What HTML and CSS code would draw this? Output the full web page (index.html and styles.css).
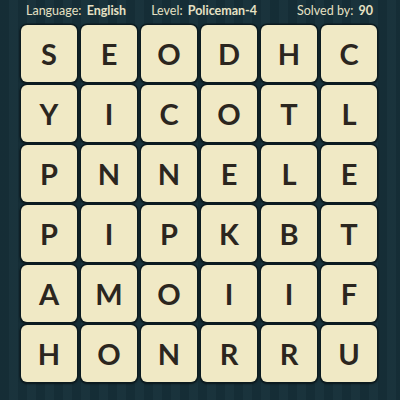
FILE: index.html
```html
<!DOCTYPE html>
<html>
<head>
<meta charset="utf-8">
<link rel="stylesheet" href="styles.css">
</head>
<body>
<div class="page">
  <div class="header">
    <span class="item">Language: <b>English</b></span>
    <span class="item">Level: <b>Policeman-4</b></span>
    <span class="item solved">Solved by: <b>90</b></span>
  </div>
  <div class="grid">
    <div class="tile">S</div><div class="tile">E</div><div class="tile">O</div><div class="tile">D</div><div class="tile">H</div><div class="tile">C</div>
    <div class="tile">Y</div><div class="tile">I</div><div class="tile">C</div><div class="tile">O</div><div class="tile">T</div><div class="tile">L</div>
    <div class="tile">P</div><div class="tile">N</div><div class="tile">N</div><div class="tile">E</div><div class="tile">L</div><div class="tile">E</div>
    <div class="tile">P</div><div class="tile">I</div><div class="tile">P</div><div class="tile">K</div><div class="tile">B</div><div class="tile">T</div>
    <div class="tile">A</div><div class="tile">M</div><div class="tile">O</div><div class="tile">I</div><div class="tile">I</div><div class="tile">F</div>
    <div class="tile">H</div><div class="tile">O</div><div class="tile">N</div><div class="tile">R</div><div class="tile">R</div><div class="tile">U</div>
  </div>
</div>
</body>
</html>
```
FILE: styles.css
```css
html, body {
  margin: 0;
  padding: 0;
}
body {
  width: 400px;
  height: 400px;
  overflow: hidden;
  background: #163039;
}
.page {
  width: 400px;
  height: 400px;
  background-color: #163039;
  background-image: repeating-linear-gradient(90deg,
    rgba(0,0,0,0.06) 0px, rgba(0,0,0,0.06) 9px,
    rgba(255,255,255,0.015) 9px, rgba(255,255,255,0.015) 18px);
  font-family: Lato, "Open Sans", sans-serif;
}
.header {
  display: flex;
  align-items: center;
  height: 22px;
  padding: 0 27px 0 26px;
  gap: 25px;
  color: #e6e1c4;
  font-size: 12.5px;
  line-height: 22px;
  white-space: nowrap;
}
.item {
  flex-shrink: 0;
}
.header b {
  font-weight: 700;
  margin-left: 2px;
}
.solved {
  margin-left: auto;
}
.grid {
  display: grid;
  grid-template-columns: repeat(6, 56px);
  grid-auto-rows: 57px;
  column-gap: 4px;
  row-gap: 3px;
  padding: 3px 0 0 21px;
}
.tile {
  background: #f0e9c5;
  border-radius: 6px;
  box-shadow: 0 0 0 1.5px #0c1b20, 0 1px 2px 1px rgba(0,0,0,0.5);
  display: flex;
  align-items: center;
  justify-content: center;
  color: #2b261f;
  font-size: 29px;
  font-weight: 700;
  line-height: 1;
}
```
